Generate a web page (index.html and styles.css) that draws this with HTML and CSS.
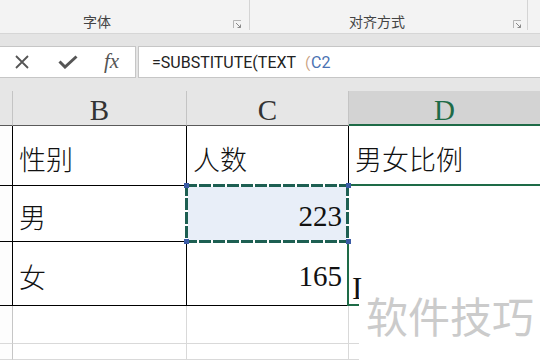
FILE: index.html
```html
<!DOCTYPE html>
<html>
<head>
<meta charset="utf-8">
<link rel="stylesheet" href="styles.css">
</head>
<body>
<div class="app">
  <div class="ribbon">
    <div class="group g1"><span class="glabel l1">字体</span><svg class="launcher" width="9" height="9" viewBox="0 0 9 9"><path d="M0.5 8V0.5H8" fill="none" stroke="#b5b5b5"/><path d="M3 3L7.5 7.5M4.5 7.5H7.5V4.5" fill="none" stroke="#8a8a8a"/></svg></div>
    <div class="group g2"><span class="glabel l2">对齐方式</span><svg class="launcher" width="9" height="9" viewBox="0 0 9 9"><path d="M0.5 8V0.5H8" fill="none" stroke="#b5b5b5"/><path d="M3 3L7.5 7.5M4.5 7.5H7.5V4.5" fill="none" stroke="#8a8a8a"/></svg></div>
    <div class="group g3"></div>
  </div>
  <div class="band"></div>
  <div class="fbar">
    <div class="fbtns">
      <svg class="ic-x" width="14" height="14" viewBox="0 0 14 14"><path d="M1 1L13 13M13 1L1 13" stroke="#555" stroke-width="1.8" fill="none"/></svg>
      <svg class="ic-ok" width="20" height="14" viewBox="0 0 20 14"><path d="M1.5 6.5L7 12L18.5 1.5" stroke="#555" stroke-width="3" fill="none"/></svg>
      <span class="fx">fx</span>
    </div>
    <div class="finput">=SUBSTITUTE(TEXT<span class="paren">（</span><span class="ref">C2</span></div>
  </div>
  <div class="band2"></div>
  <div class="sheet">
    <div class="c hdr corner"></div>
    <div class="c hdr ch">B</div>
    <div class="c hdr ch">C</div>
    <div class="c hdr ch sel">D</div>

    <div class="c rh t"></div>
    <div class="c t txt">性别</div>
    <div class="c t txt">人数</div>
    <div class="c txt dcell">男女比例</div>

    <div class="c rh t"></div>
    <div class="c t txt">男</div>
    <div class="c t num refcell">223</div>
    <div class="c dsel"></div>

    <div class="c rh t"></div>
    <div class="c t txt">女</div>
    <div class="c t num">165</div>
    <div class="c dsel"></div>

    <div class="c rh"></div>
    <div class="c"></div>
    <div class="c"></div>
    <div class="c"></div>

    <div class="c rh"></div>
    <div class="c"></div>
    <div class="c"></div>
    <div class="c"></div>

    <div class="active"></div>
    <div class="ants"></div>
    <div class="handle h1"></div>
    <div class="handle h2"></div>
    <div class="handle h3"></div>
    <div class="handle h4"></div>
    <div class="ibeam">I</div>
  </div>
  <div class="watermark">软件技巧</div>
</div>
</body>
</html>
```
FILE: styles.css
```css
* { box-sizing: border-box; }
html, body { margin: 0; padding: 0; }
body { width: 540px; height: 360px; overflow: hidden; background: #fff; }
.app { position: relative; width: 540px; height: 360px; overflow: hidden; display: flex; flex-direction: column; font-family: "Noto Sans CJK SC", sans-serif; }

.ribbon { height: 34px; background: #f3f3f3; border-bottom: 1px solid #d6d6d6; display: flex; flex: none; }
.group { height: 30px; display: flex; align-items: flex-start; padding-top: 11px; }
.g1 { width: 250px; border-right: 1px solid #d4d4d4; }
.g2 { width: 278px; border-right: 1px solid #d4d4d4; }
.g3 { flex: 1; }
.glabel { font-size: 14px; line-height: 20px; color: #444; text-align: center; }
.l1 { width: 194px; }
.l2 { width: 254px; }
.launcher { margin-left: auto; margin-top: 9px; }
.g1 .launcher { margin-right: 7px; }
.g2 .launcher { margin-right: 5px; }

.band { height: 12px; background: #e4e4e4; flex: none; }
.fbar { height: 32px; display: flex; flex: none; background: #e4e4e4; }
.fbtns { width: 137px; margin-left: -1px; background: #fff; border: 1px solid #c6c6c6; display: flex; align-items: center; padding-left: 15px; }
.ic-ok { margin-left: 29px; }
.fx { margin-left: 26px; font-family: "Liberation Serif", serif; font-style: italic; font-size: 21px; color: #555; line-height: 1; margin-top: -2px; }
.finput { flex: 1; margin-left: 2px; margin-right: -4px; background: #fff; border: 1px solid #c6c6c6; display: flex; align-items: center; padding-left: 13px; font-family: Roboto, "Liberation Sans", sans-serif; font-size: 16px; color: #222; white-space: nowrap; }
.paren { color: #caa27f; font-family: "Noto Sans CJK SC", sans-serif; margin-left: -1px; }
.ref { color: #4a72b2; }
.band2 { height: 13px; background: #e6e6e6; flex: none; }

.sheet { position: relative; flex: 1; display: grid; grid-template-columns: 13px 174px 162px 1fr; grid-template-rows: 35px 60px 56px 64px 38px 1fr; }
.c { border-right: 1px solid #d9d9d9; border-bottom: 1px solid #d9d9d9; }
.hdr { background: #e6e6e6; border-right-color: #c4c4c4; border-bottom-color: #5a5a5a; }
.ch { font-family: "Liberation Serif", serif; font-size: 29px; line-height: 1; color: #333; display: flex; justify-content: center; align-items: center; padding-top: 5px; }
.ch.sel { background: #d3d3d3; color: #1e6b47; border-bottom: 2px solid #1e6b47; border-right: none; }
.rh { background: #fdfdfd; border-right-color: #c6c6c6; }
.rh.t { border-right-color: #000; }
.t { border-right-color: #000; border-bottom-color: #000; }
.txt { font-size: 27px; font-weight: 300; line-height: 1; color: #111; display: flex; align-items: center; padding: 5px 0 0 6px; white-space: nowrap; }
.num { font-family: "Liberation Serif", serif; font-size: 29px; line-height: 1; color: #111; display: flex; align-items: center; justify-content: flex-end; padding: 5px 6px 0 0; }
.refcell { background: #e8eef8; }
.dcell { border-right: none; }
.dsel { border: none; }

.active { position: absolute; left: 347px; top: 93px; width: 220px; height: 122px; border: 2px solid #1e6b47; }
.ants { position: absolute; left: 185px; top: 93px; width: 164px; height: 59px;
  background:
    repeating-linear-gradient(90deg, #1d5f52 0 12px, #fff 12px 14px) left top / 100% 3px no-repeat,
    repeating-linear-gradient(90deg, #1d5f52 0 12px, #fff 12px 14px) left bottom / 100% 3px no-repeat,
    repeating-linear-gradient(180deg, #1d5f52 0 12px, #fff 12px 14px) left top / 3px 100% no-repeat,
    repeating-linear-gradient(180deg, #1d5f52 0 12px, #fff 12px 14px) right top / 3px 100% no-repeat; }
.handle { position: absolute; width: 5px; height: 5px; background: #3b5ba5; }
.h1 { left: 184px; top: 92px; }
.h2 { left: 184px; top: 148px; }
.h3 { left: 346px; top: 92px; }
.h4 { left: 346px; top: 148px; }
.ibeam { position: absolute; left: 352px; top: 182px; font-family: "Liberation Serif", serif; font-size: 31px; line-height: 1; color: #111; }

.watermark { position: absolute; left: 359px; top: 292px; right: 0; bottom: 0; background: #fff; color: #cbcbcb; font-size: 42px; line-height: 1; padding: 2px 0 0 7px; white-space: nowrap; }
```
